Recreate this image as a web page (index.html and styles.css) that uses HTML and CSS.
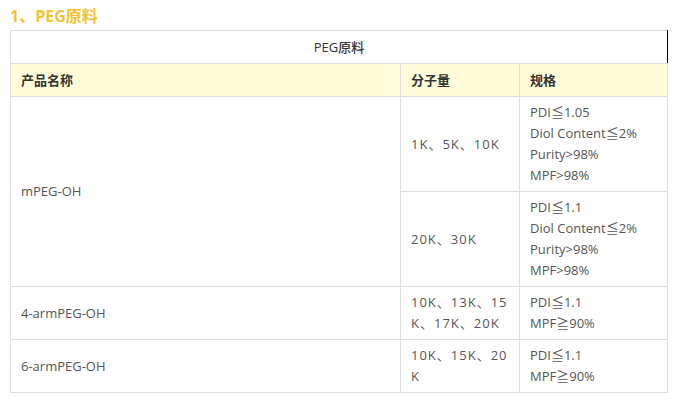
FILE: index.html
```html
<!DOCTYPE html>
<html lang="zh">
<head>
<meta charset="utf-8">
<link rel="stylesheet" href="styles.css">
</head>
<body>
<h3 class="title">1、PEG原料</h3>
<table class="peg">
  <colgroup>
    <col class="c1"><col class="c2"><col class="c3">
  </colgroup>
  <tr><th colspan="3" class="caption-cell">PEG原料</th></tr>
  <tr class="head"><th>产品名称</th><th>分子量</th><th>规格</th></tr>
  <tr>
    <td rowspan="2">mPEG-OH</td>
    <td class="mw">1K、5K、10K</td>
    <td>PDI≦1.05<br>Diol Content≦2%<br>Purity&gt;98%<br>MPF&gt;98%</td>
  </tr>
  <tr>
    <td class="mw">20K、30K</td>
    <td>PDI≦1.1<br>Diol Content≦2%<br>Purity&gt;98%<br>MPF&gt;98%</td>
  </tr>
  <tr>
    <td>4-armPEG-OH</td>
    <td class="mw">10K、13K、15K、17K、20K</td>
    <td>PDI≦1.1<br>MPF≧90%</td>
  </tr>
  <tr>
    <td>6-armPEG-OH</td>
    <td class="mw">10K、15K、20K</td>
    <td>PDI≦1.1<br>MPF≧90%</td>
  </tr>
</table>
</body>
</html>
```
FILE: styles.css
```css
html, body {
  margin: 0;
  padding: 0;
  background: #fff;
}
body {
  padding: 0 10px;
  font-family: "Open Sans", "Noto Sans CJK JP", sans-serif;
  font-size: 13px;
  color: #555;
}
.title {
  margin: 0;
  padding-top: 6px;
  height: 24px;
  font-size: 16px;
  line-height: 20px;
  font-weight: bold;
  color: #f2c233;
}
.peg {
  border-collapse: collapse;
  width: 657px;
  table-layout: fixed;
}
.c1 { width: 390px; }
.c2 { width: 119px; }
.c3 { width: 148px; }
.peg th, .peg td {
  border: 1px solid #ddd;
  padding: 5px 10px;
  line-height: 21px;
  text-align: left;
  vertical-align: middle;
  word-break: break-all;
}
.peg .mw {
  letter-spacing: 1px;
}
.peg th {
  padding: 6px 10px 5px;
  color: #333;
  font-weight: 600;
}
.peg .caption-cell {
  text-align: center;
  font-weight: 500;
  color: #333;
  border-right: 1px solid #000;
}
.head th {
  background: #fefcd8;
}
```
